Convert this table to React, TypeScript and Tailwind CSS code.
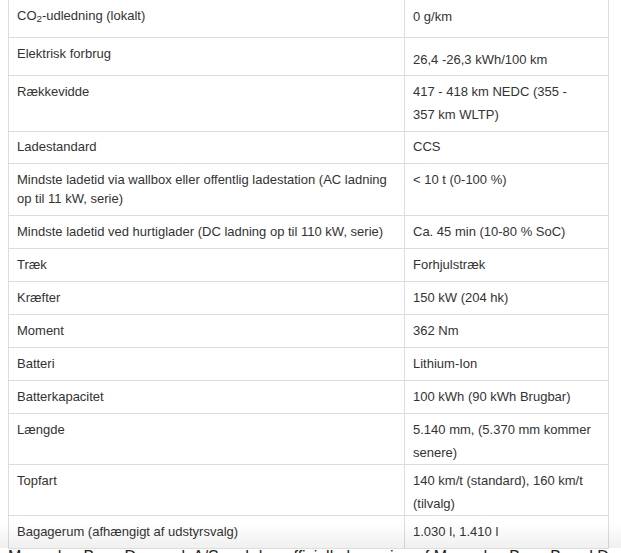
import { ReactNode } from "react";

type SpecRow = {
  label: ReactNode;
  value: ReactNode;
  h: string;
  labelPad?: string;
  valuePad?: string;
};

const rows: SpecRow[] = [
  {
    label: (
      <>
        CO<sub>2</sub>-udledning (lokalt)
      </>
    ),
    value: "0 g/km",
    h: "h-[38px]",
    labelPad: "pt-[6px]",
    valuePad: "pt-[5px]",
  },
  { label: "Elektrisk forbrug", value: "26,4 -26,3 kWh/100 km", h: "h-[38px]", valuePad: "pt-[10px]" },
  {
    label: "Rækkevidde",
    value: (
      <>
        417 - 418 km NEDC (355 -
        <br />
        357 km WLTP)
      </>
    ),
    h: "h-[56px]",
  },
  { label: "Ladestandard", value: "CCS", h: "h-[32px]", labelPad: "pt-[5px]", valuePad: "pt-[3px]" },
  {
    label: (
      <>
        Mindste ladetid via wallbox eller offentlig ladestation (AC ladning
        <br />
        op til 11 kW, serie)
      </>
    ),
    value: "< 10 t (0-100 %)",
    h: "h-[52px]",
  },
  {
    label: "Mindste ladetid ved hurtiglader (DC ladning op til 110 kW, serie)",
    value: "Ca. 45 min (10-80 % SoC)",
    h: "h-[33px]",
  },
  { label: "Træk", value: "Forhjulstræk", h: "h-[33px]" },
  { label: "Kræfter", value: "150 kW (204 hk)", h: "h-[33px]" },
  { label: "Moment", value: "362 Nm", h: "h-[33px]" },
  { label: "Batteri", value: "Lithium-Ion", h: "h-[33px]" },
  { label: "Batterkapacitet", value: "100 kWh (90 kWh Brugbar)", h: "h-[33px]" },
  {
    label: "Længde",
    value: (
      <>
        5.140 mm, (5.370 mm kommer
        <br />
        senere)
      </>
    ),
    h: "h-[51px]",
  },
  {
    label: "Topfart",
    value: (
      <>
        140 km/t (standard), 160 km/t
        <br />
        (tilvalg)
      </>
    ),
    h: "h-[51px]",
  },
  { label: "Bagagerum (afhængigt af udstyrsvalg)", value: "1.030 l, 1.410 l", h: "h-[33px]" },
];

export default function App() {
  return (
    <div className="relative h-[553px] w-[621px] overflow-hidden bg-white font-['Liberation_Sans',Arial,sans-serif]">
      <div className="ml-2 w-[601px] border-x border-[#dddddd] text-[13px] text-[#333333]">
        {rows.map((row, i) => (
          <div key={i} className={`flex border-b border-[#dddddd] ${row.h}`}>
            <div
              className={`w-[396px] shrink-0 whitespace-nowrap border-r border-[#dddddd] px-2 leading-[19px] ${
                row.labelPad ?? "pt-[6px]"
              }`}
            >
              {row.label}
            </div>
            <div className={`min-w-0 flex-1 whitespace-nowrap px-2 leading-[23px] ${row.valuePad ?? "pt-[4px]"}`}>
              {row.value}
            </div>
          </div>
        ))}
      </div>

      {/* fade over the last row */}
      <div className="pointer-events-none absolute left-0 right-0 top-[522px] h-[26px] bg-gradient-to-b from-transparent to-black/[0.06]" />

      <p className="-mt-[1px] ml-2 whitespace-nowrap text-[16px] leading-[18px] text-[#222222]">
        Mercedes-Benz Danmark A/S ved den officielle lancering af Mercedes-Benz Brand Danmark, model af for
      </p>
    </div>
  );
}
